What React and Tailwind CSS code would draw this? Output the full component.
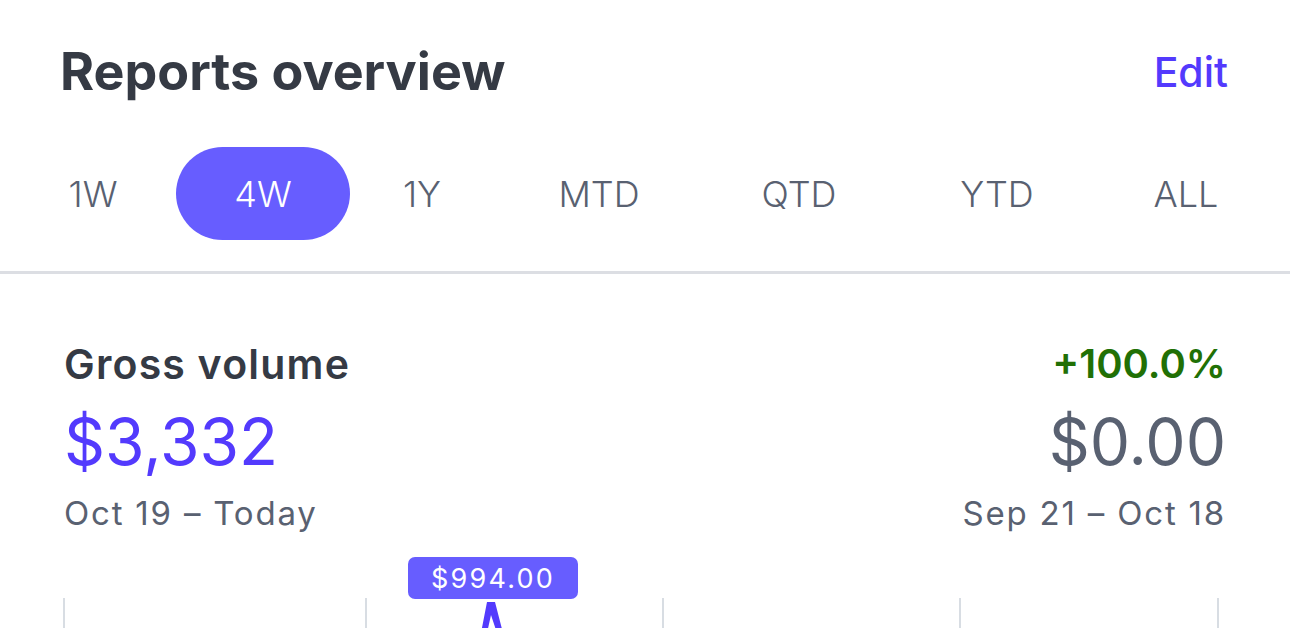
import React from "react";

// each tab sits in a slot; widths taken so the labels centre where the design has them
const tabs = [
  { label: "1W", w: "w-[170px]" },
  { label: "4W", w: "w-[170px]" },
  { label: "1Y", w: "w-[148px]" },
  { label: "MTD", w: "w-[206px]" },
  { label: "QTD", w: "w-[194px]" },
  { label: "YTD", w: "w-[202px]" },
  { label: "ALL", w: "w-[176px]" },
];

const App = () => {
  const active = "4W";

  return (
    <div
      className="w-[1290px] h-[628px] overflow-hidden bg-white text-[#353a44]"
      style={{ fontFamily: "Inter, 'Noto Sans', sans-serif" }}
    >
      {/* header */}
      <div className="flex items-start justify-between pl-[60px] pr-[62px] pt-[40px]">
        <h1 className="text-[52px] font-bold leading-[64px]">Reports overview</h1>
        <button className="text-[41px] font-medium leading-[64px] text-[#533afd]">Edit</button>
      </div>

      {/* range tabs */}
      <div className="flex items-center pl-[8px] pt-[43px]">
        {tabs.map((t) => (
          <div key={t.label} className={`${t.w} flex justify-center`}>
            <span
              className={`h-[93px] px-[58px] flex items-center rounded-full text-[36px] font-light leading-none ${
                t.label === active ? "bg-[#675dff] text-white" : "text-[#596171]"
              }`}
            >
              {t.label}
            </span>
          </div>
        ))}
      </div>

      <div className="mt-[31px] h-[3px] bg-[#dcdee3]" />

      {/* gross volume */}
      <div className="flex justify-between pl-[64px] pr-[64px] pt-[67px]">
        <div className="flex flex-col items-start">
          <span className="text-[41px] font-semibold leading-[46px] tracking-[1.2px]">Gross volume</span>
          <span className="mt-[15px] text-[64px] leading-[80px] text-[#533afd]">$3,332</span>
          <span className="mt-[11px] text-[33px] leading-[40px] tracking-[1.8px] text-[#596171]">Oct 19 – Today</span>
        </div>
        <div className="flex flex-col items-end">
          <span className="text-[40px] font-semibold leading-[46px] text-[#217005]">+100.0%</span>
          <span className="mt-[15px] text-[64px] leading-[80px] text-[#596171]">$0.00</span>
          <span className="mt-[11px] text-[33px] leading-[40px] tracking-[1.8px] text-[#596171]">Sep 21 – Oct 18</span>
        </div>
      </div>

      {/* chart */}
      <div className="relative mt-[24px] h-[80px]">
        <svg width="1290" height="80" className="absolute left-0 top-0">
          {[64, 366, 663, 960, 1218].map((x) => (
            <line key={x} x1={x} y1="41" x2={x} y2="80" stroke="#d8dde3" strokeWidth="2" />
          ))}
          <polygon
            points="487,45 495,45 503,76 497,76 491,58 487,76 481,76"
            fill="#533afd"
          />
        </svg>
        <div className="absolute left-[408px] top-0 h-[42px] w-[170px] rounded-[7px] bg-[#675dff] flex items-center justify-center text-[27px] tracking-[2.2px] text-white leading-none">
          $994.00
        </div>
      </div>
    </div>
  );
};

export default App;
